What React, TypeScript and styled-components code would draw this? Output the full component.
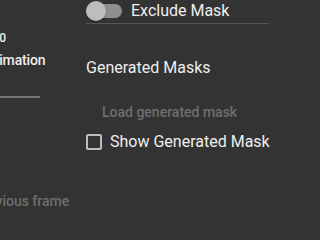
import React, { useState } from 'react';
import styled, { createGlobalStyle } from 'styled-components';

const bg = '#333333';
const text = '#eeeeee';
const disabled = '#6e6e6e';
const divider = '#555555';

const GlobalStyle = createGlobalStyle`
  html, body {
    margin: 0;
    padding: 0;
    background: ${bg};
    overflow: hidden;
  }
  body {
    font-family: Roboto, 'Liberation Sans', sans-serif;
    color: ${text};
  }
`;

const App = () => {
  const [exclude, setExclude] = useState<boolean>(false);
  const [showMask, setShowMask] = useState<boolean>(false);

  return (
    <Page>
      <GlobalStyle />
      {/* 왼쪽 패널 (잘려서 보임) */}
      <LeftColumn>
        <Caption>Frames: 0</Caption>
        <Label>Play Animation</Label>
        <Track />
        <GhostText>Use previous frame</GhostText>
      </LeftColumn>

      {/* 오른쪽 패널 */}
      <RightColumn>
        <SwitchRow onClick={() => setExclude(!exclude)}>
          <SwitchTrack on={exclude}>
            <SwitchThumb on={exclude} />
          </SwitchTrack>
          <RowLabel>Exclude Mask</RowLabel>
        </SwitchRow>
        <Divider />
        <SectionTitle>Generated Masks</SectionTitle>
        <ButtonRow>
          <GhostButton disabled>Load generated mask</GhostButton>
        </ButtonRow>
        <CheckRow onClick={() => setShowMask(!showMask)}>
          <CheckBox checked={showMask} />
          <RowLabel>Show Generated Mask</RowLabel>
        </CheckRow>
      </RightColumn>
    </Page>
  );
};

const Page = styled.div`
  width: 305px;
  height: 224px;
  display: flex;
  align-items: flex-start;
`;

const LeftColumn = styled.div`
  width: 133px;
  margin-left: -47px;
  display: flex;
  flex-direction: column;
  flex-shrink: 0;
`;

const Caption = styled.div`
  margin-top: 30px;
  font-size: 12px;
  line-height: 16px;
  font-weight: 500;
  white-space: nowrap;
`;

const Label = styled.div`
  margin-top: 4px;
  font-size: 14px;
  line-height: 20px;
  font-weight: 500;
  letter-spacing: -0.15px;
  white-space: nowrap;
`;

const Track = styled.div`
  margin-top: 26px;
  width: 87px;
  height: 2px;
  background: #777777;
`;

const GhostText = styled.div`
  margin-top: 93px;
  margin-left: -5px;
  font-size: 14px;
  line-height: 20px;
  font-weight: 500;
  color: ${disabled};
  white-space: nowrap;
`;

const RightColumn = styled.div`
  width: 183px;
  display: flex;
  flex-direction: column;
`;

const SwitchRow = styled.div`
  height: 22px;
  display: flex;
  align-items: center;
  cursor: pointer;
`;

const SwitchTrack = styled.div<{ on: boolean }>`
  position: relative;
  width: 36px;
  height: 14px;
  border-radius: 7px;
  background: ${(p) => (p.on ? '#90caf9' : '#8f8f8f')};
  flex-shrink: 0;
`;

const SwitchThumb = styled.div<{ on: boolean }>`
  position: absolute;
  top: -3px;
  left: ${(p) => (p.on ? '16px' : '0px')};
  width: 20px;
  height: 20px;
  border-radius: 50%;
  background: #bdbdbd;
  box-shadow: 0 1px 2px rgba(0, 0, 0, 0.3);
`;

const RowLabel = styled.span`
  margin-left: 9px;
  font-size: 16px;
  line-height: 24px;
  white-space: nowrap;
`;

const Divider = styled.div`
  margin-top: 1px;
  height: 1px;
  background: ${divider};
`;

const SectionTitle = styled.div`
  margin-top: 32px;
  font-size: 16px;
  line-height: 24px;
  white-space: nowrap;
`;

const ButtonRow = styled.div`
  margin-top: 20px;
  padding-left: 16px;
  display: flex;
`;

const GhostButton = styled.button`
  all: unset;
  font-size: 14px;
  line-height: 24.5px;
  font-weight: 500;
  color: ${disabled};
  white-space: nowrap;
`;

const CheckRow = styled.div`
  margin-top: 5px;
  height: 24px;
  display: flex;
  align-items: center;
  cursor: pointer;

  span {
    margin-left: 8px;
  }
`;

const CheckBox = styled.div<{ checked: boolean }>`
  box-sizing: border-box;
  width: 16px;
  height: 16px;
  border: 2px solid #bdbdbd;
  border-radius: 2px;
  background: ${(p) => (p.checked ? '#90caf9' : 'transparent')};
  flex-shrink: 0;
`;

export default App;
